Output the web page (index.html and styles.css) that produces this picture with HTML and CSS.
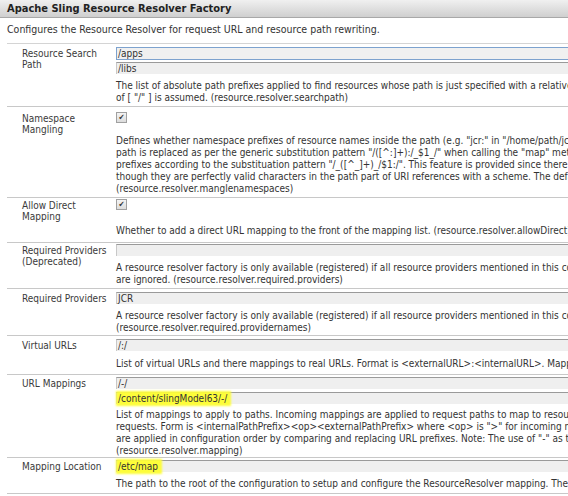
FILE: index.html
```html
<!DOCTYPE html>
<html lang="en">
<head>
  <meta charset="UTF-8" />
  <title>Apache Sling Resource Resolver Factory</title>
  <link rel="stylesheet" href="styles.css">
</head>
<body>
  <div class="dialog">
    <div class="title-bar">Apache Sling Resource Resolver Factory</div>
    <div class="intro">Configures the Resource Resolver for request URL and resource path rewriting.</div>

    <div class="props">
      <div class="prop prop-search">
        <div class="label">Resource Search Path</div>
        <div class="field">
          <div class="input focused">/apps</div>
          <div class="input">/libs</div>
          <p class="desc">The list of absolute path prefixes applied to find resources whose path is just specified with a relative path. The default value<br>of [ "/" ] is assumed. (resource.resolver.searchpath)</p>
        </div>
      </div>

      <div class="prop prop-mangling">
        <div class="label">Namespace Mangling</div>
        <div class="field">
          <span class="check">&#10004;</span>
          <p class="desc">Defines whether namespace prefixes of resource names inside the path (e.g. "jcr:" in "/home/path/jcr:content") are mangled or not. Mangling<br>path is replaced as per the generic substitution pattern "/([^:]+):/_$1_/" when calling the "map" method of the resource resolver. Reversely<br>prefixes according to the substituation pattern "/_([^_]+)_/$1:/". This feature is provided since there may be systems out there in the wild<br>though they are perfectly valid characters in the path part of URI references with a scheme. The default value of this property if no configuration<br>(resource.resolver.manglenamespaces)</p>
        </div>
      </div>

      <div class="prop prop-direct">
        <div class="label">Allow Direct Mapping</div>
        <div class="field">
          <span class="check">&#10004;</span>
          <p class="desc">Whether to add a direct URL mapping to the front of the mapping list. (resource.resolver.allowDirect)</p>
        </div>
      </div>

      <div class="prop prop-deprecated">
        <div class="label">Required Providers (Deprecated)</div>
        <div class="field">
          <div class="input"></div>
          <p class="desc">A resource resolver factory is only available (registered) if all resource providers mentioned in this configuration are available. Provider names<br>are ignored. (resource.resolver.required.providers)</p>
        </div>
      </div>

      <div class="prop prop-providers">
        <div class="label">Required Providers</div>
        <div class="field">
          <div class="input">JCR</div>
          <p class="desc">A resource resolver factory is only available (registered) if all resource providers mentioned in this configuration are available. Provider names<br>(resource.resolver.required.providernames)</p>
        </div>
      </div>

      <div class="prop prop-virtual">
        <div class="label">Virtual URLs</div>
        <div class="field">
          <div class="input">/:/</div>
          <p class="desc">List of virtual URLs and there mappings to real URLs. Format is &lt;externalURL&gt;:&lt;internalURL&gt;. Mappings are applied on the complete request URL only.</p>
        </div>
      </div>

      <div class="prop prop-mappings">
        <div class="label">URL Mappings</div>
        <div class="field">
          <div class="input">/-/</div>
          <div class="input"><mark>/content/slingModel63/-/</mark></div>
          <p class="desc">List of mappings to apply to paths. Incoming mappings are applied to request paths to map to resource paths, outgoing mappings are applied to map<br>requests. Form is &lt;internalPathPrefix&gt;&lt;op&gt;&lt;externalPathPrefix&gt; where &lt;op&gt; is "&gt;" for incoming mappings, "&lt;" for outgoing mappings and ":" for<br>are applied in configuration order by comparing and replacing URL prefixes. Note: The use of "-" as the first character of the internal path prefix<br>(resource.resolver.mapping)</p>
        </div>
      </div>

      <div class="prop prop-location">
        <div class="label">Mapping Location</div>
        <div class="field">
          <div class="input"><mark>/etc/map</mark></div>
          <p class="desc">The path to the root of the configuration to setup and configure the ResourceResolver mapping. The default value is /etc/map. (resource.resolver.map.location)</p>
        </div>
      </div>
    </div>
  </div>
</body>
</html>
```

FILE: styles.css
```css
* {
  margin: 0;
  padding: 0;
  box-sizing: border-box;
}

html, body {
  overflow: hidden;
}

body {
  background: #ffffff;
  font-family: Tahoma, "DejaVu Sans Condensed", "Liberation Sans", sans-serif;
  font-size: 10px;
  color: #333333;
  width: 760px;
}

.title-bar {
  height: 18px;
  padding: 0 7px;
  line-height: 17px;
  font-weight: bold;
  font-size: 11px;
  color: #222222;
  background: linear-gradient(#f0f0f0, #cfcfcf);
  border-bottom: 1px solid #a8a8a8;
}

.intro {
  margin-left: 7px;
  padding-top: 5px;
  height: 26px;
  font-size: 10.5px;
  line-height: 12px;
  border-bottom: 1px solid #d4d4d4;
}

.prop {
  display: grid;
  grid-template-columns: 94px 1fr;
  margin-left: 7px;
  padding: 3px 0 0 15px;
  border-bottom: 1px solid #c8c8c8;
}

.label {
  padding-top: 1px;
  line-height: 11px;
  color: #3a3a3a;
  padding-right: 8px;
}

.field {
  display: flex;
  flex-direction: column;
  align-items: stretch;
}

.input {
  height: 12px;
  margin-bottom: 2px;
  line-height: 11px;
  padding-left: 1px;
  background: #efefef;
  border-top: 1px solid #9a9a9a;
  border-left: 1px solid #c8c8c8;
  color: #333333;
  white-space: nowrap;
}

.input.focused {
  height: 13px;
  border: 1px solid #7da2ce;
  background: #f0f0f0;
}

mark {
  background: #fdfd3a;
  color: #333333;
  box-shadow: 0 0 2px 2px #fdfd3a;
  padding: 0 2px 0 0;
}

.check {
  width: 11px;
  height: 11px;
  border: 1px solid #a0a0a0;
  background: linear-gradient(#f4f4f4, #dcdcdc);
  font-size: 8px;
  line-height: 9px;
  text-align: center;
  color: #333333;
}

.desc {
  padding: 4px 0 2px;
  line-height: 12px;
  white-space: nowrap;
}

.prop-search {
  padding-top: 3px;
}

.prop-mangling {
  padding-top: 5px;
}

.prop-mangling .desc {
  padding: 12px 0 2px;
}

.prop-direct {
  padding-top: 1px;
}

.prop-direct .desc {
  padding: 15px 0 5px;
}

.prop-deprecated {
  padding-top: 1px;
}

.prop-providers .desc {
  padding-bottom: 1px;
}

.prop-virtual .desc {
  padding: 5px 0 4px;
}

.prop-mappings {
  padding-top: 2px;
}

.prop-mappings .input + .input {
  margin-top: 1px;
}

.prop-mappings .desc {
  padding: 3px 0 0;
}

.prop-location {
  padding-top: 2px;
}

.prop-location .desc {
  padding: 4px 0 3px;
}
```
